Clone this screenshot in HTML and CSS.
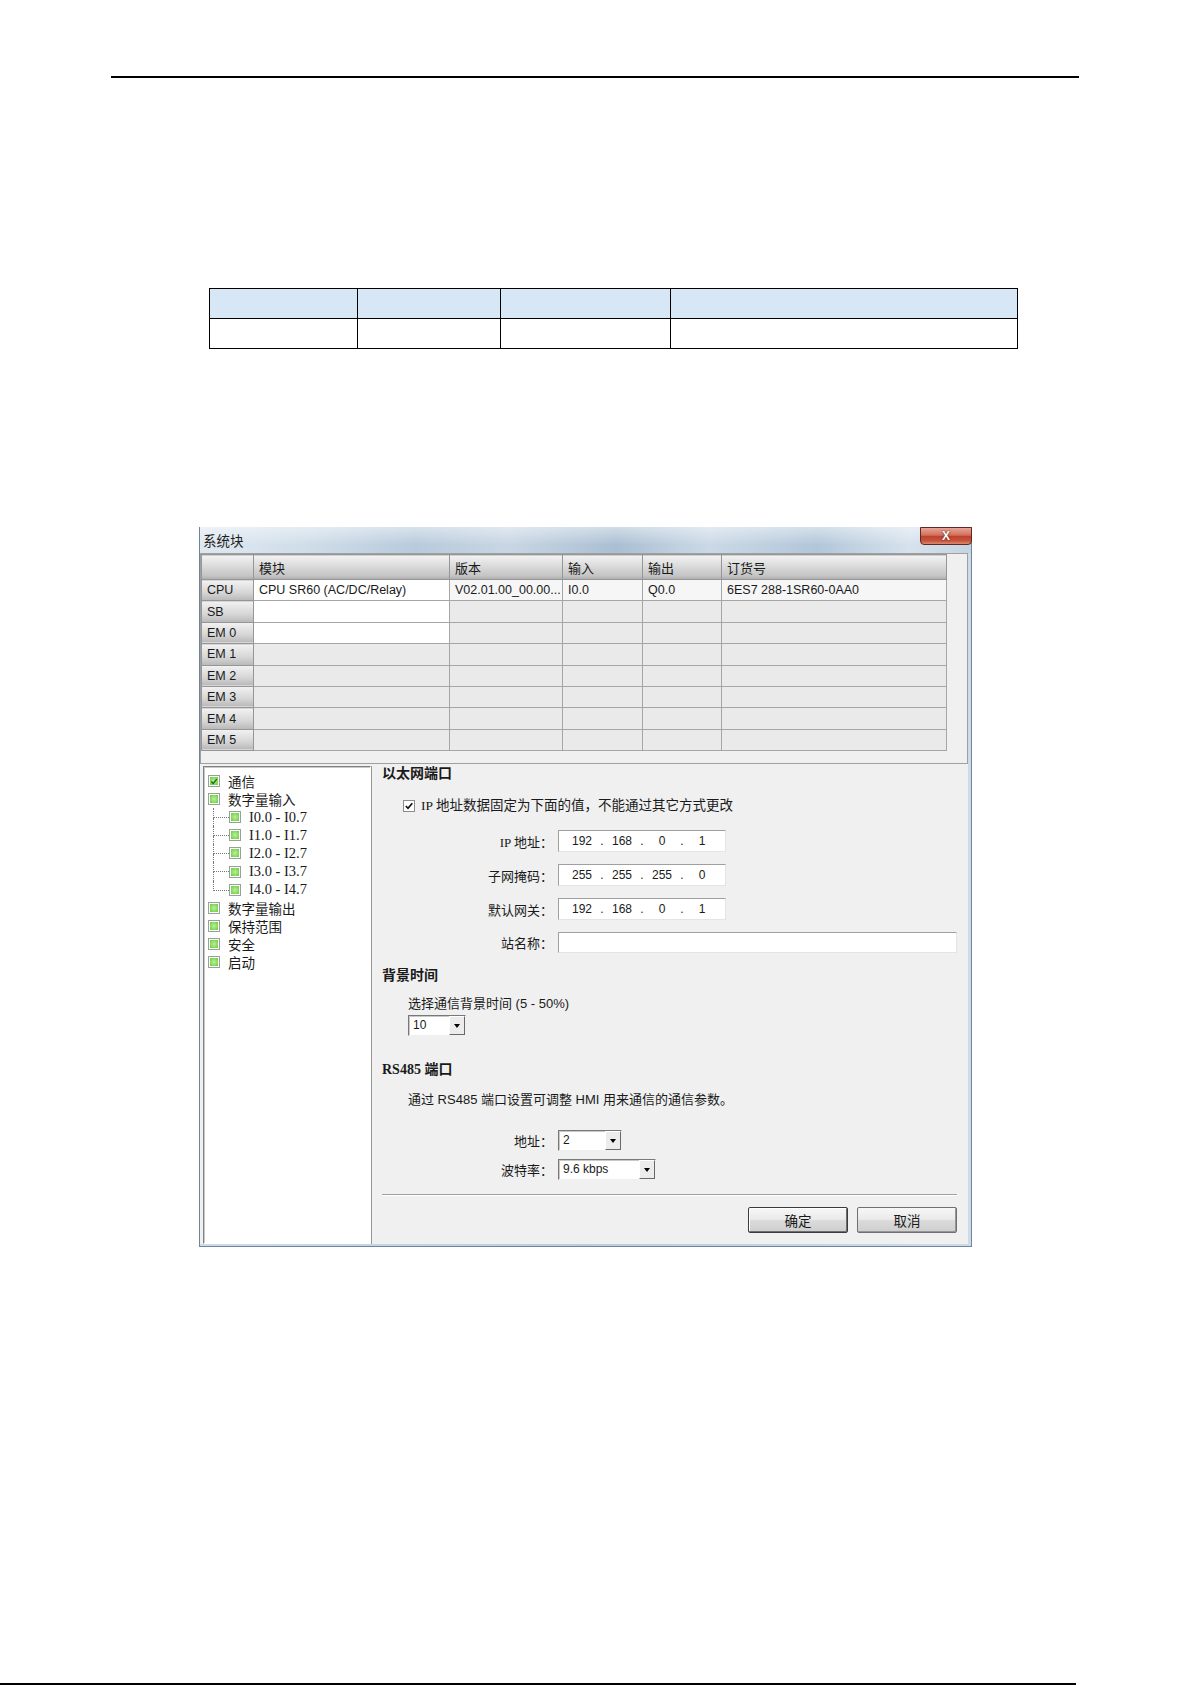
FILE: index.html
```html
<!DOCTYPE html>
<html lang="zh-CN">

<head>
  <title>系统块</title>
  <meta charset="UTF-8">
  <link rel="stylesheet" href="styles.css">
</head>

<body>
  <div class="pagina">
    <div class="linha-topo"></div>

    <table class="tabela">
      <thead>
        <tr>
          <th class="col-a"></th>
          <th class="col-b"></th>
          <th class="col-c"></th>
          <th></th>
        </tr>
      </thead>
      <tbody>
        <tr>
          <td></td>
          <td></td>
          <td></td>
          <td></td>
        </tr>
      </tbody>
    </table>

    <div class="janela">
      <div class="janela-titulo">
        <span class="titulo">系统块</span>
        <span class="fechar">X</span>
      </div>

      <div class="janela-corpo">
        <div class="grade">
          <table class="modulos">
            <thead>
              <tr>
                <th class="rh"></th>
                <th class="m-mod">模块</th>
                <th class="m-ver">版本</th>
                <th class="m-in">输入</th>
                <th class="m-out">输出</th>
                <th>订货号</th>
              </tr>
            </thead>
            <tbody id="lista-modulos"></tbody>
          </table>
        </div>

        <div class="inferior">
          <ul class="arvore">
            <li class="no">
              <span class="caixa">
                <svg viewBox="0 0 9 9" width="9" height="9"><path d="M1.5 4.6 L3.6 6.8 L7.6 1.8" fill="none" stroke="#1f6a12" stroke-width="1.6"/></svg>
              </span>通信
            </li>
            <li class="no"><span class="caixa"></span>数字量输入</li>
            <li class="sub"><span class="ramo"></span><span class="caixa"></span>I0.0 - I0.7</li>
            <li class="sub"><span class="ramo"></span><span class="caixa"></span>I1.0 - I1.7</li>
            <li class="sub"><span class="ramo"></span><span class="caixa"></span>I2.0 - I2.7</li>
            <li class="sub"><span class="ramo"></span><span class="caixa"></span>I3.0 - I3.7</li>
            <li class="sub ultimo"><span class="ramo"></span><span class="caixa"></span>I4.0 - I4.7</li>
            <li class="no"><span class="caixa"></span>数字量输出</li>
            <li class="no"><span class="caixa"></span>保持范围</li>
            <li class="no"><span class="caixa"></span>安全</li>
            <li class="no"><span class="caixa"></span>启动</li>
          </ul>

          <div class="config">
            <h3 class="secao">以太网端口</h3>
            <div class="check-linha">
              <span class="check">
                <svg viewBox="0 0 10 10" width="10" height="10"><path d="M1.8 5 L4 7.3 L8.3 2.2" fill="none" stroke="#111" stroke-width="1.7"/></svg>
              </span>
              <span>IP 地址数据固定为下面的值，不能通过其它方式更改</span>
            </div>

            <div class="campo primeiro">
              <label>IP 地址：</label>
              <div class="ip"><span class="oct">192</span><span class="pt">.</span><span class="oct">168</span><span class="pt">.</span><span class="oct">0</span><span class="pt">.</span><span class="oct">1</span></div>
            </div>
            <div class="campo">
              <label>子网掩码：</label>
              <div class="ip"><span class="oct">255</span><span class="pt">.</span><span class="oct">255</span><span class="pt">.</span><span class="oct">255</span><span class="pt">.</span><span class="oct">0</span></div>
            </div>
            <div class="campo">
              <label>默认网关：</label>
              <div class="ip"><span class="oct">192</span><span class="pt">.</span><span class="oct">168</span><span class="pt">.</span><span class="oct">0</span><span class="pt">.</span><span class="oct">1</span></div>
            </div>
            <div class="campo estacao">
              <label>站名称：</label>
              <div class="entrada"></div>
            </div>

            <h3 class="secao fundo">背景时间</h3>
            <p class="texto">选择通信背景时间 (5 - 50%)</p>
            <div class="combo combo-tempo">
              <span class="combo-valor">10</span>
              <span class="combo-seta"></span>
            </div>

            <h3 class="secao rs485">RS485 端口</h3>
            <p class="texto desc">通过 RS485 端口设置可调整 HMI 用来通信的通信参数。</p>

            <div class="campo endereco">
              <label>地址：</label>
              <div class="combo combo-end">
                <span class="combo-valor">2</span>
                <span class="combo-seta"></span>
              </div>
            </div>
            <div class="campo baud">
              <label>波特率：</label>
              <div class="combo combo-baud">
                <span class="combo-valor">9.6 kbps</span>
                <span class="combo-seta"></span>
              </div>
            </div>

            <div class="separador"></div>

            <div class="botoes">
              <span class="botao padrao">确定</span>
              <span class="botao">取消</span>
            </div>
          </div>
        </div>
      </div>
    </div>

    <div class="linha-rodape"></div>
  </div>

  <script>
    const modulos = [
      { slot: 'CPU', campos: ['CPU SR60 (AC/DC/Relay)', 'V02.01.00_00.00...', 'I0.0', 'Q0.0', '6ES7 288-1SR60-0AA0'] },
      { slot: 'SB', campos: [] },
      { slot: 'EM 0', campos: [] },
      { slot: 'EM 1', campos: [] },
      { slot: 'EM 2', campos: [] },
      { slot: 'EM 3', campos: [] },
      { slot: 'EM 4', campos: [] },
      { slot: 'EM 5', campos: [] }
    ]

    function listarModulos() {
      const tbodyE = document.getElementById('lista-modulos')
      modulos.forEach((modulo, i) => {
        const trE = document.createElement('tr')
        const thE = document.createElement('th')
        thE.innerText = modulo.slot
        trE.appendChild(thE)
        for (let c = 0; c < 5; c++) {
          const tdE = document.createElement('td')
          tdE.innerText = modulo.campos[c] || ''
          if (c === 0 && i < 3) tdE.className = 'branco'
          else if (i === 0) tdE.className = 'claro'
          trE.appendChild(tdE)
        }
        tbodyE.appendChild(trE)
      })
    }

    listarModulos();
  </script>
</body>

</html>
```

FILE: styles.css
```css
* {
  margin: 0;
  padding: 0;
  box-sizing: border-box;
}

body {
  background-color: white;
  font-family: "Liberation Sans", "Noto Sans CJK SC", sans-serif;
  color: rgb(26, 26, 26);
}

.pagina {
  width: 1192px;
  height: 1685px;
  display: flex;
  flex-direction: column;
}

.linha-topo {
  margin: 76px 113px 0 111px;
  border-top: 2px solid black;
}

.linha-rodape {
  margin-top: auto;
  width: 1076px;
  border-top: 2px solid black;
}

/* empty document table */

.tabela {
  align-self: flex-start;
  margin: 210px 0 0 209px;
  width: 809px;
  border: 1px solid black;
  border-collapse: collapse;
}

.tabela th,
.tabela td {
  border: 1px solid black;
  height: 30px;
}

.tabela thead th {
  background-color: rgb(216, 231, 245);
}

.tabela .col-a {
  width: 148px;
}

.tabela .col-b {
  width: 143px;
}

.tabela .col-c {
  width: 170px;
}

/* dialog window */

.janela {
  align-self: flex-start;
  flex-shrink: 0;
  margin: 178px 0 0 199px;
  width: 773px;
  height: 720px;
  display: flex;
  flex-direction: column;
  border: 1px solid rgb(112, 132, 154);
  border-top: none;
  background: linear-gradient(90deg, rgb(205, 219, 232), rgb(186, 204, 222) 50%, rgb(205, 219, 232));
}

.janela-titulo {
  height: 26px;
  display: flex;
  justify-content: space-between;
  align-items: flex-start;
  background:
    linear-gradient(180deg, rgba(255, 255, 255, 0.45), rgba(255, 255, 255, 0) 70%),
    linear-gradient(90deg, rgb(222, 232, 241) 0%, rgb(207, 221, 233) 14%, rgb(184, 202, 220) 28%, rgb(200, 214, 228) 40%, rgb(170, 191, 211) 54%, rgb(203, 217, 230) 66%, rgb(178, 198, 218) 80%, rgb(214, 226, 237) 92%, rgb(196, 212, 228) 100%);
}

.titulo {
  padding-left: 3px;
  line-height: 26px;
  font-size: 13.5px;
  font-family: "Noto Sans CJK SC", sans-serif;
  color: rgb(30, 30, 30);
}

.fechar {
  width: 52px;
  height: 18px;
  margin-right: -1px;
  border: 1px solid rgb(96, 40, 32);
  border-radius: 0 0 4px 4px;
  background: linear-gradient(180deg, rgb(231, 165, 150), rgb(210, 112, 92) 45%, rgb(190, 66, 44) 52%, rgb(199, 84, 61) 80%, rgb(219, 137, 108));
  color: white;
  font-weight: bold;
  font-size: 12px;
  line-height: 16px;
  text-align: center;
  text-shadow: 0 0 2px rgb(60, 15, 8);
}

.janela-corpo {
  flex: 1;
  display: flex;
  flex-direction: column;
  margin: 0 3px 2px 0;
  background-color: rgb(240, 240, 240);
}

/* module grid */

.grade {
  height: 211px;
  border: 1px solid rgb(160, 160, 160);
  background-color: rgb(240, 240, 240);
  overflow: hidden;
}

.modulos {
  width: 746px;
  table-layout: fixed;
  border-collapse: collapse;
  font-size: 12.5px;
}

.modulos th,
.modulos td {
  border: 1px solid rgb(166, 166, 166);
  padding: 0 5px;
  text-align: left;
  font-weight: normal;
  white-space: nowrap;
  overflow: hidden;
}

.modulos thead th {
  height: 25px;
  border-color: rgb(150, 150, 150);
  font-size: 13px;
  font-family: "Noto Sans CJK SC", sans-serif;
  background: linear-gradient(180deg, rgb(243, 243, 243), rgb(221, 221, 221) 40%, rgb(196, 196, 196) 85%, rgb(172, 172, 172));
}

.modulos tbody th {
  height: 21.4px;
  border-color: rgb(150, 150, 150);
  background: linear-gradient(180deg, rgb(242, 242, 242), rgb(214, 214, 214) 60%, rgb(184, 184, 184));
}

.modulos td {
  background-color: rgb(234, 234, 234);
}

.modulos td.claro {
  background-color: rgb(246, 246, 246);
}

.modulos td.branco {
  background-color: white;
}

.modulos .rh {
  width: 52px;
}

.modulos .m-mod {
  width: 196px;
}

.modulos .m-ver {
  width: 113px;
}

.modulos .m-in {
  width: 80px;
}

.modulos .m-out {
  width: 79px;
}

/* lower half: tree + settings */

.inferior {
  flex: 1;
  display: flex;
  padding-top: 2px;
}

.arvore {
  list-style: none;
  width: 168px;
  margin-left: 3px;
  padding: 5px 0 0 4px;
  background-color: white;
  border: 1px solid;
  border-color: rgb(130, 130, 130) white white rgb(130, 130, 130);
  box-shadow: inset 1px 1px 0 rgb(200, 200, 200);
  font-family: "Liberation Serif", "Noto Sans CJK SC", serif;
  font-size: 13.5px;
}

.arvore li {
  height: 18.1px;
  display: flex;
  align-items: center;
  white-space: nowrap;
}

.arvore li.sub {
  font-size: 14.5px;
}

.caixa {
  width: 12px;
  height: 12px;
  margin-right: 8px;
  flex-shrink: 0;
  display: flex;
  align-items: center;
  justify-content: center;
  border: 1px solid rgb(150, 162, 150);
  padding: 1px;
  background: radial-gradient(rgb(186, 241, 148), rgb(104, 202, 66)) content-box, white;
}

.caixa svg {
  display: block;
}

.sub .caixa {
  margin-right: 8px;
}

.ramo {
  width: 16px;
  height: 100%;
  margin-left: 5px;
  display: flex;
  flex-direction: column;
}

.ramo::before {
  content: '';
  height: 9px;
  border-left: 1px dotted rgb(120, 120, 120);
  border-bottom: 1px dotted rgb(120, 120, 120);
}

.ramo::after {
  content: '';
  flex: 1;
  border-left: 1px dotted rgb(120, 120, 120);
}

.ultimo .ramo::after {
  border-left: none;
}

.config {
  flex: 1;
  border-left: 1px solid rgb(150, 150, 150);
  padding: 0 11px 0 10px;
  font-family: "Liberation Serif", "Noto Sans CJK SC", serif;
  font-size: 13px;
}

.secao {
  font-size: 14px;
  font-weight: bold;
  line-height: 16px;
}

.secao.fundo {
  margin-top: 15px;
}

.secao.rs485 {
  margin-top: 26px;
}

.check-linha {
  margin: 16px 0 0 21px;
  display: flex;
  align-items: center;
  gap: 6px;
  font-size: 13.5px;
  line-height: 16px;
}

.check {
  width: 12px;
  height: 12px;
  display: flex;
  align-items: center;
  justify-content: center;
  border: 1px solid rgb(140, 140, 140);
  background-color: white;
}

.campo {
  display: flex;
  align-items: center;
  height: 22px;
  margin-top: 12px;
}

.campo.primeiro {
  margin-top: 16px;
}

.campo label {
  width: 171px;
  margin-right: 5px;
  text-align: right;
  white-space: nowrap;
}

.ip {
  width: 168px;
  height: 22px;
  display: flex;
  align-items: center;
  padding-left: 8px;
  background-color: white;
  border: 1px solid;
  border-color: rgb(160, 160, 160) rgb(228, 228, 228) rgb(228, 228, 228) rgb(160, 160, 160);
  font-family: "Liberation Sans", sans-serif;
  font-size: 12px;
}

.ip .oct {
  width: 30px;
  text-align: center;
}

.ip .pt {
  width: 10px;
  text-align: center;
}

.campo.estacao {
  height: 21px;
}

.entrada {
  flex: 1;
  height: 21px;
  background-color: white;
  border: 1px solid;
  border-color: rgb(160, 160, 160) rgb(228, 228, 228) rgb(228, 228, 228) rgb(160, 160, 160);
}

.texto {
  margin: 12px 0 0 26px;
  line-height: 16px;
  font-family: "Liberation Sans", "Noto Sans CJK SC", sans-serif;
}

.texto.desc {
  margin-top: 14px;
}

.combo {
  height: 21px;
  display: flex;
  background-color: white;
  border: 1px solid;
  border-color: rgb(120, 120, 120) rgb(240, 240, 240) rgb(240, 240, 240) rgb(120, 120, 120);
  box-shadow: inset 1px 1px 0 rgb(200, 200, 200);
  font-family: "Liberation Sans", sans-serif;
  font-size: 12px;
}

.combo-valor {
  flex: 1;
  padding-left: 4px;
  line-height: 19px;
}

.combo-seta {
  width: 16px;
  display: flex;
  align-items: center;
  justify-content: center;
  background-color: rgb(236, 236, 236);
  border: 1px solid;
  border-color: white rgb(105, 105, 105) rgb(105, 105, 105) white;
}

.combo-seta::after {
  content: '';
  border-left: 3.5px solid transparent;
  border-right: 3.5px solid transparent;
  border-top: 4px solid black;
}

.combo-tempo {
  width: 58px;
  margin: 3px 0 0 26px;
}

.campo.endereco {
  height: 21px;
  margin-top: 22px;
}

.campo.baud {
  height: 21px;
  margin-top: 8px;
}

.combo-end {
  width: 64px;
}

.combo-baud {
  width: 98px;
}

.separador {
  margin-top: 14px;
  border-top: 1px solid rgb(160, 160, 160);
  border-bottom: 1px solid white;
}

.botoes {
  margin-top: 11px;
  display: flex;
  justify-content: flex-end;
  gap: 9px;
}

.botao {
  width: 100px;
  height: 26px;
  display: flex;
  align-items: center;
  justify-content: center;
  border: 1px solid rgb(112, 112, 112);
  border-radius: 2px;
  background: linear-gradient(180deg, rgb(247, 247, 247), rgb(233, 233, 233) 50%, rgb(219, 219, 219) 51%, rgb(206, 206, 206));
  box-shadow: inset -1px -1px 0 rgb(150, 150, 150);
  font-family: "Noto Sans CJK SC", sans-serif;
  font-size: 13.5px;
}

.botao.padrao {
  border-color: rgb(60, 60, 60);
  box-shadow: inset -1px -1px 0 rgb(110, 110, 110), inset 1px 1px 0 white;
}
```
